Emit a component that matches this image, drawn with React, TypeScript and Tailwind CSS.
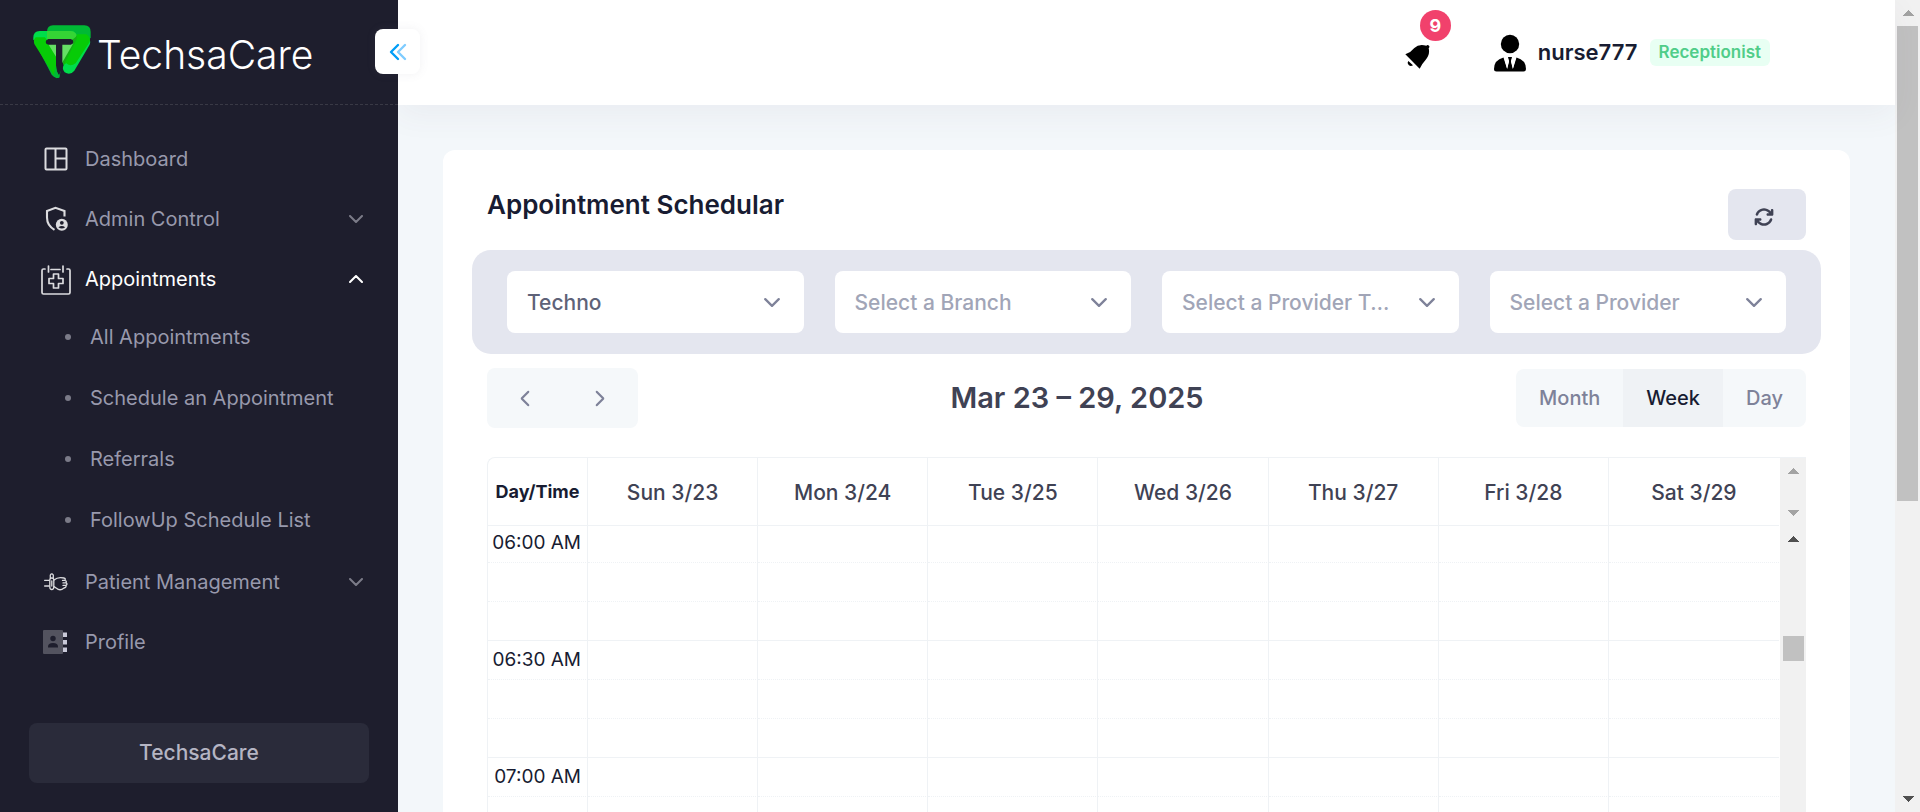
import React from "react";
import { FaArrowsRotate } from "react-icons/fa6";

type IconProps = { className?: string };

function Chevron({ className = "" }: IconProps) {
  return (
    <svg viewBox="0 0 14 8" fill="none" stroke="currentColor" strokeWidth="2" strokeLinecap="round" strokeLinejoin="round" className={className} aria-hidden="true">
      <path d="M1 1l6 6 6-6" />
    </svg>
  );
}

function LogoMark() {
  return (
    <svg viewBox="26 29 174 162" className="h-[54px] w-[58px] shrink-0" aria-hidden="true">
      <path d="M86 30H180Q199 30 199 50V66L190 84H68V50Q68 30 86 30Z" fill="#00b935" />
      <path d="M46 47H138Q158 48 158 68L120 130H80L27 72Q25 47 46 47Z" fill="#00dd4b" />
      <path d="M86 47H138Q158 48 158 68V84H68V47Z" fill="#35d435" />
      <path d="M27 72L82 178Q92 191 105 187L112 150L70 78Z" fill="#00b935" />
      <path d="M34 66H62L98 120V186Q92 186 88 179L30 86Q26 74 34 66Z" fill="#07cb07" />
      <path d="M158 66H186Q202 72 196 88L150 166Q138 181 121 171Q112 162 118 150Z" fill="#00dd4b" />
      <path d="M158 57H186Q200 66 196 80L154 144Q138 156 126 144L116 150Z" fill="#07cb07" />
      <path d="M158 62Q158 74 150 86L118 148L108 130L140 76Z" fill="#14b014" />
      <path d="M70 84H147L110 148Z" fill="#65e065" />
      <path d="M72 71H139Q147 73 147 80T139 88H114V150Q113 165 104 180Q96 170 95 150V88H72Q64 86 64 80T72 71Z" fill="#1e1e2d" />
      <path d="M95 150Q96 174 106 183L96 189L88 180Z" fill="#00b935" />
    </svg>
  );
}

function DashboardIcon() {
  return (
    <svg viewBox="0 0 24 24" fill="none" stroke="currentColor" strokeWidth="2" className="ml-px size-6" aria-hidden="true">
      <rect x="1.500" y="1.500" width="21" height="21" rx="1" />
      <path d="M11.500 2v20M11.500 11.500H22" />
    </svg>
  );
}

function ShieldPersonIcon() {
  return (
    <svg viewBox="0 0 24 26" className="ml-1 h-[26px] w-6" aria-hidden="true">
      <path d="M19.500 10.500V5L10.500 1.800L2 5V11.500Q2 19.500 9.500 23.800" fill="none" stroke="currentColor" strokeWidth="2.100" />
      <circle cx="16.800" cy="18.800" r="6" fill="currentColor" />
      <circle cx="16.800" cy="16.800" r="1.900" fill="#1e1e2d" />
      <path d="M13.400 21.200Q16.800 18.600 20.200 21.200Q16.800 24 13.400 21.200Z" fill="#1e1e2d" />
    </svg>
  );
}

function CalendarPlusIcon() {
  return (
    <svg viewBox="0 0 30 30" fill="none" stroke="currentColor" strokeWidth="1.700" strokeLinecap="round" strokeLinejoin="round" className="mt-0.5 ml-0.5 size-[30px] shrink-0" aria-hidden="true">
      <path d="M4 4H2.500Q1 4 1 5.500V27.500Q1 29 2.500 29H27.500Q29 29 29 27.500V5.500Q29 4 27.500 4H26M10 4.500h9M7.500 1v6M22 1v6" />
      <path d="M12.500 9h5v4.500H22v5h-4.500V23h-5v-4.500H8v-5h4.500z" />
    </svg>
  );
}

function PatientIcon() {
  return (
    <svg viewBox="0 0 24 18" fill="none" stroke="currentColor" strokeWidth="1.300" strokeLinecap="round" strokeLinejoin="round" className="ml-0.5 h-[18px] w-6" aria-hidden="true">
      <path d="M.6 7.300h4.600M.6 13h4.600" />
      <path d="M6.300 5V2Q7.800-.2 9.300 2V5M5.800 7Q5.800 5 7.800 5T9.800 7V14Q9.800 16.500 7.800 16.500T5.800 14ZM7.800 8v5" />
      <path d="M10 7Q14 3.500 20 5Q22 5.400 20.800 7.400Q23 7.800 22 9.800Q24 11 22 12.400Q22.500 14.600 20 15Q16 18.500 12.500 15.200L10 13.600M18.500 7.400h2.300M19 9.900h3M19 12.400h3" />
    </svg>
  );
}

function AddressBookIcon() {
  return (
    <svg viewBox="0 0 24 26" className="h-[26px] w-6" aria-hidden="true">
      <rect x="0" y="1" width="20" height="24" rx="1" fill="#53535f" />
      <circle cx="10" cy="9.500" r="2.700" fill="#1e1e2d" />
      <path d="M5 18.500v-1Q5 14 10 14t5 3.500v1z" fill="#1e1e2d" />
      <path d="M20 3.500h4v4.500h-4zM20 11h4v4.500h-4zM20 18.500h4v4.500h-4z" fill="#c9c9d8" />
    </svg>
  );
}

function BellIcon() {
  return (
    <svg viewBox="32 115 75 75" className="size-[25px]" aria-hidden="true">
      <path d="M33 146Q50 140 60 127Q74 113 96 120Q100 116 104 120Q107 124 103 128Q108 146 93 164Q82 176 76 189Z" fill="#000" />
      <path d="M42 166L56 179Q49 184 43 178T42 166Z" fill="#000" />
    </svg>
  );
}

function PersonIcon() {
  return (
    <svg viewBox="0 0 32 38" className="h-[38px] w-8" aria-hidden="true">
      <circle cx="16" cy="10" r="9.200" fill="#000" />
      <path d="M0 35Q0 26 9.500 23.500L13 34.500L15 27L14 23h4l-1 4l2 7.500L22.500 23.500Q32 26 32 35Q32 37.500 29.500 37.500h-27Q0 37.500 0 35Z" fill="#000" />
      <path d="M10 23.400L13.200 35L15 27.500L13.500 23.500ZM22 23.400L18.800 35L17 27.500L18.500 23.500Z" fill="#fff" />
    </svg>
  );
}

function ScrollArrow({ down = false, className = "" }: { down?: boolean; className?: string }) {
  return (
    <svg viewBox="0 0 12 6" shapeRendering="crispEdges" className={`h-1.5 w-3 shrink-0 ${down ? "rotate-180" : ""} ${className}`} aria-hidden="true">
      <path d="M6 0L12 6H0Z" fill="currentColor" />
    </svg>
  );
}

type Item = { label: string; icon: React.ReactNode; expandable?: boolean; children?: string[] };

const items: Item[] = [
  { label: "Dashboard", icon: <DashboardIcon /> },
  { label: "Admin Control", icon: <ShieldPersonIcon />, expandable: true },
  {
    label: "Appointments",
    icon: <CalendarPlusIcon />,
    expandable: true,
    children: ["All Appointments", "Schedule an Appointment", "Referrals", "FollowUp Schedule List"],
  },
  { label: "Patient Management", icon: <PatientIcon />, expandable: true },
  { label: "Profile", icon: <AddressBookIcon /> },
];

function NavItem({ item }: { item: Item }) {
  const open = Boolean(item.children);
  const body = (
    <>
      <span className="flex w-[30px] justify-center text-[#dcdcdf]">{item.icon}</span>
      <span className="ml-[15px] grow text-left">{item.label}</span>
      {item.expandable && <Chevron className={open ? "h-2 w-3.5 rotate-180" : "h-2 w-3.5 text-[#7b7b88]"} />}
    </>
  );
  const row = "flex h-[60px] w-full items-center pr-[35px] pl-10";
  return (
    <li>
      {item.expandable ? (
        <button type="button" aria-expanded={open} className={`${row} ${open ? "text-white" : ""}`}>{body}</button>
      ) : (
        <a href="#" className={row}>{body}</a>
      )}
      {item.children && (
        <ul className="-mt-[3px] mb-0.5">
          {item.children.map((label) => (
            <li key={label}>
              <a href="#" className="flex h-[61px] items-center pl-[65px]">
                <span className="mr-[19px] size-1.5 rounded-full bg-[#7b7b88]" />
                {label}
              </a>
            </li>
          ))}
        </ul>
      )}
    </li>
  );
}

function Sidebar() {
  return (
    <aside className="relative z-20 flex w-[398px] shrink-0 flex-col bg-[#1e1e2d] text-[#9899ac]">
      <div className="flex h-[105px] shrink-0 items-center border-b border-dashed border-[#393945] pl-[33px]">
        <LogoMark />
        <span className="mt-1 ml-1.5 text-[39px] leading-none font-light text-white">TechsaCare</span>
      </div>
      <button
        type="button"
        aria-label="Collapse sidebar"
        className="absolute top-[29px] -right-[22px] flex size-[45px] items-center justify-center rounded-lg bg-white shadow-[0_0_10px_rgba(113,121,136,0.1)]"
      >
        <svg viewBox="0 0 18 18" fill="none" strokeWidth="2.400" strokeLinecap="round" strokeLinejoin="round" className="size-[18px]" aria-hidden="true">
          <path d="M16 2L9 9l7 7" stroke="#7fccff" />
          <path d="M9 2L2 9l7 7" stroke="#009ef7" />
        </svg>
      </button>
      <nav className="grow pt-6 text-[20px]">
        <ul>
          {items.map((item) => (
            <NavItem key={item.label} item={item} />
          ))}
        </ul>
      </nav>
      <div className="px-[29px] pb-[29px]">
        <button type="button" className="h-[60px] w-full rounded-lg bg-[#2a2b3a] text-[21px] font-medium text-[#b5b5c3]">TechsaCare</button>
      </div>
    </aside>
  );
}

function Header() {
  return (
    <header className="relative z-10 flex h-[105px] shrink-0 items-center justify-end bg-white pr-[125px] shadow-[0_10px_30px_rgba(82,63,105,0.06)]">
      <button type="button" aria-label="Notifications" className="relative mt-2 mr-16">
        <BellIcon />
        <span className="absolute -top-[34px] left-[15px] flex size-[31px] items-center justify-center rounded-full bg-[#f1416c] text-[18px] font-bold text-white">9</span>
      </button>
      <PersonIcon />
      <span className="ml-3 text-[22px] font-semibold text-[#181c32]">nurse777</span>
      <span className="ml-3 flex h-[27px] items-center rounded-md bg-[#e8fff3] px-[9px] text-[17px] font-semibold text-[#50cd89]">Receptionist</span>
    </header>
  );
}

const filters = [
  { name: "Organization", text: "Techno", filled: true },
  { name: "Branch", text: "Select a Branch", filled: false },
  { name: "Provider type", text: "Select a Provider Type", filled: false },
  { name: "Provider", text: "Select a Provider", filled: false },
];

function Filters() {
  return (
    <div className="-mx-[15px] mt-2.5 grid grid-cols-4 gap-[31px] rounded-[19px] bg-[#e4e6ef] px-[35px] py-[21px]">
      {filters.map((filter) => (
        <label key={filter.name} className="relative flex items-center">
          <select
            aria-label={filter.name}
            className={`h-[62px] w-full appearance-none overflow-hidden rounded-lg bg-white pt-0.5 pr-[66px] pl-5 text-[21px] font-medium text-ellipsis whitespace-nowrap ${filter.filled ? "text-[#5e6278]" : "text-[#a1a5b7]"}`}
          >
            <option>{filter.text}</option>
          </select>
          <Chevron className="pointer-events-none absolute right-6 h-[9px] w-4 text-[#7e8299]" />
        </label>
      ))}
    </div>
  );
}

function Toolbar() {
  return (
    <div className="mt-3.5 flex items-center justify-between">
      <div className="flex h-[60px] w-[151px] overflow-hidden rounded-lg bg-[#f5f8fa] text-[#7e8299]">
        <button type="button" aria-label="Previous week" className="flex flex-1 items-center justify-center">
          <Chevron className="h-[9px] w-4 rotate-90" />
        </button>
        <button type="button" aria-label="Next week" className="flex flex-1 items-center justify-center">
          <Chevron className="h-[9px] w-4 -rotate-90" />
        </button>
      </div>
      <h2 className="text-[29px] font-semibold text-[#3f4254]">Mar 23 – 29, 2025</h2>
      <div className="flex h-[58px] overflow-hidden rounded-lg bg-[#f5f8fa] text-[20px] font-medium text-[#7e8299]">
        <button type="button" className="px-[23px]">Month</button>
        <button type="button" aria-pressed="true" className="bg-[#eff2f5] px-[23px] text-[#181c32]">Week</button>
        <button type="button" className="px-[23px]">Day</button>
      </div>
    </div>
  );
}

const days = ["Sun 3/23", "Mon 3/24", "Tue 3/25", "Wed 3/26", "Thu 3/27", "Fri 3/28", "Sat 3/29"];
const slots = ["06:00 AM", "", "", "06:30 AM", "", "", "07:00 AM", "", ""];

function Columns() {
  return (
    <colgroup>
      <col className="w-[100px]" />
      {days.map((day) => (
        <col key={day} />
      ))}
    </colgroup>
  );
}

function Calendar() {
  return (
    <div className="mt-[29px] grid grid-cols-[1fr_27px] overflow-hidden rounded-tl-lg border-t border-l border-[#eff2f5]">
      <table className="w-full table-fixed border-separate border-spacing-0">
        <Columns />
        <thead>
          <tr className="h-[68px]">
            <th className="border-r border-b border-[#eff2f5] text-[18px] font-bold text-[#181c32]">Day/Time</th>
            {days.map((day) => (
              <th key={day} className="border-r border-b border-[#eff2f5] pt-0.5 text-[21px] font-medium text-[#3f4254] last:border-r-0">{day}</th>
            ))}
          </tr>
        </thead>
      </table>
      <div className="ml-px flex flex-col items-center justify-between bg-[#f1f1f1] py-2.5 text-[#a3a3a3]">
        <ScrollArrow />
        <ScrollArrow down />
      </div>
      <div className="overflow-hidden">
        <table className="-mt-0.5 w-full table-fixed border-separate border-spacing-0">
          <Columns />
          <tbody>
            {slots.map((slot, i) => {
              const line = i % 3 === 2 ? "border-b border-b-[#eff2f5]" : "border-b border-b-[#eff2f5] [border-bottom-style:dotted]";
              return (
                <tr key={i} className="h-[39px]">
                  <td className={`border-r border-r-[#eff2f5] pr-1.5 pb-0.5 text-right text-[19px] leading-none whitespace-nowrap text-[#181c32] ${line}`}>{slot}</td>
                  {days.map((day) => (
                    <td key={day} className={`border-r border-r-[#eff2f5] last:border-r-0 ${line}`} />
                  ))}
                </tr>
              );
            })}
          </tbody>
        </table>
      </div>
      <div className="ml-px flex flex-col items-center bg-[#f1f1f1] pt-2.5 text-[#505050]">
        <ScrollArrow />
        <div className="mt-[94px] h-[25px] w-[21px] bg-[#c1c1c1]" />
      </div>
    </div>
  );
}

export default function App() {
  return (
    <div className="flex h-screen overflow-hidden bg-[#f3f7fa] font-['Inter',sans-serif]">
      <Sidebar />
      <div className="flex min-w-0 grow flex-col">
        <Header />
        <main className="min-h-0 grow px-[45px] pt-[45px]">
          <section className="rounded-xl bg-white px-11 pt-[39px] pb-10">
            <div className="flex items-start justify-between">
              <h1 className="text-[26px] leading-[32px] font-semibold text-[#181c32]">Appointment Schedular</h1>
              <button type="button" aria-label="Refresh" className="flex h-[51px] w-[78px] items-center justify-center rounded-lg bg-[#e4e6ef] pt-1 pr-1.5 text-[#3f4254]">
                <FaArrowsRotate className="size-5" />
              </button>
            </div>
            <Filters />
            <Toolbar />
            <Calendar />
          </section>
        </main>
      </div>
      <div className="flex w-[25px] shrink-0 flex-col items-center bg-[#f1f1f1] py-2.5" aria-hidden="true">
        <ScrollArrow className="text-[#a3a3a3]" />
        <div className="mt-2.5 h-3/5 w-[21px] bg-[#c1c1c1]" />
        <ScrollArrow down className="mt-auto text-[#505050]" />
      </div>
    </div>
  );
}
